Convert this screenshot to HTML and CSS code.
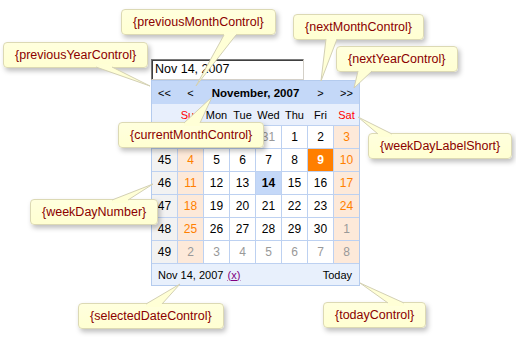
FILE: index.html
```html
<!DOCTYPE html>
<html>
<head>
<meta charset="utf-8">
<title>Calendar control</title>
<link rel="stylesheet" href="styles.css">
</head>
<body>
<div class="stage">
  <div class="widget">
    <div class="date-input">Nov 14, 2007</div>
    <div class="cal">
      <div class="cal-head">
        <span class="nav">&lt;&lt;</span>
        <span class="nav">&lt;</span>
        <span class="title">November, 2007</span>
        <span class="nav">&gt;</span>
        <span class="nav">&gt;&gt;</span>
      </div>
      <div class="cal-days">
        <span></span><span class="red">Sun</span><span>Mon</span><span>Tue</span><span>Wed</span><span>Thu</span><span>Fri</span><span class="red">Sat</span>
      </div>
      <div class="cal-grid">
        <span class="wk">44</span><span class="we other">28</span><span class="other">29</span><span class="other">30</span><span class="other">31</span><span>1</span><span>2</span><span class="we">3</span>
        <span class="wk">45</span><span class="we">4</span><span>5</span><span>6</span><span>7</span><span>8</span><span class="sel">9</span><span class="we">10</span>
        <span class="wk">46</span><span class="we">11</span><span>12</span><span>13</span><span class="today">14</span><span>15</span><span>16</span><span class="we">17</span>
        <span class="wk">47</span><span class="we">18</span><span>19</span><span>20</span><span>21</span><span>22</span><span>23</span><span class="we">24</span>
        <span class="wk">48</span><span class="we">25</span><span>26</span><span>27</span><span>28</span><span>29</span><span>30</span><span class="we other">1</span>
        <span class="wk">49</span><span class="we other">2</span><span class="other">3</span><span class="other">4</span><span class="other">5</span><span class="other">6</span><span class="other">7</span><span class="we other">8</span>
      </div>
      <div class="cal-foot">
        <span>Nov 14, 2007 <a class="clear">(x)</a></span>
        <span>Today</span>
      </div>
    </div>
  </div>

  <div class="tip t-prevmonth">{previousMonthControl}</div>
  <div class="tip t-prevyear">{previousYearControl}</div>
  <div class="tip t-nextmonth">{nextMonthControl}</div>
  <div class="tip t-nextyear">{nextYearControl}</div>
  <div class="tip t-curmonth">{currentMonthControl}</div>
  <div class="tip t-daylabel">{weekDayLabelShort}</div>
  <div class="tip t-weeknum">{weekDayNumber}</div>
  <div class="tip t-seldate">{selectedDateControl}</div>
  <div class="tip t-today">{todayControl}</div>

  <svg class="tails" width="516" height="340" viewBox="0 0 516 340">
    <g class="tail">
      <polygon points="224,32 224,35 196,86 236,35 236,32"/>
      <polyline points="224,35 196,86 236,35"/>
    </g>
    <g class="tail">
      <polygon points="96,64 96,67 150,86 112,67 112,64"/>
      <polyline points="96,67 150,86 112,67"/>
    </g>
    <g class="tail">
      <polygon points="326,36 326,39 321,81 337,39 337,36"/>
      <polyline points="326,39 321,81 337,39"/>
    </g>
    <g class="tail">
      <polygon points="358,68 358,71 354,88 372,71 372,68"/>
      <polyline points="358,71 354,88 372,71"/>
    </g>
    <g class="tail">
      <polygon points="184,126 184,123 212,97 200,123 200,126"/>
      <polyline points="184,123 212,97 200,123"/>
    </g>
    <g class="tail">
      <polygon points="378,137 378,134 358,117 392,134 392,137"/>
      <polyline points="378,134 358,117 392,134"/>
    </g>
    <g class="tail">
      <polygon points="112,203 112,200 153,184 128,200 128,203"/>
      <polyline points="112,200 153,184 128,200"/>
    </g>
    <g class="tail">
      <polygon points="146,307 146,304 180,284 162,304 162,307"/>
      <polyline points="146,304 180,284 162,304"/>
    </g>
    <g class="tail">
      <polygon points="388,306 388,303 360,283 404,303 404,306"/>
      <polyline points="388,303 360,283 404,303"/>
    </g>
  </svg>
</div>
</body>
</html>
```

FILE: styles.css
```css
* { box-sizing: border-box; }
html, body { margin: 0; padding: 0; background: #fff; }
body { font-family: "Liberation Sans", Arial, sans-serif; color: #000; }

.stage {
  position: relative;
  width: 516px;
  height: 340px;
  overflow: hidden;
}

.widget {
  padding: 59px 0 0 151px;
  display: flex;
  flex-direction: column;
  align-items: flex-start;
}

.date-input {
  width: 153px;
  height: 21px;
  border: 1px solid;
  border-color: #7a7a7a #d4d0c8 #d4d0c8 #7a7a7a;
  box-shadow: inset 1px 1px 0 #404040;
  font-size: 12.5px;
  line-height: 19px;
  padding: 0 0 0 3px;
  background: #fff;
}

.cal {
  width: 209px;
  border: 1px solid #b4cbee;
  font-size: 11px;
  background: #fff;
}

.cal-head, .cal-days, .cal-grid {
  display: grid;
  grid-template-columns: repeat(8, 25px);
  column-gap: 1px;
}

.cal-head {
  height: 23px;
  background: #c4d8f8;
  align-items: center;
}
.cal-head span { text-align: center; }
.cal-head .title {
  grid-column: 3 / 7;
  font-weight: bold;
  font-size: 11.5px;
}

.cal-days {
  height: 22px;
  background: #e8effc;
  align-items: center;
  border-bottom: 1px solid #bdd1f1;
}
.cal-days span { text-align: center; }
.red { color: #ff0000; }

.cal-grid {
  grid-auto-rows: 22px;
  row-gap: 1px;
  background: #bdd1f1;
  border-bottom: 1px solid #bdd1f1;
  font-size: 12px;
}
.cal-grid span {
  background: #fff;
  display: flex;
  align-items: center;
  justify-content: center;
}
.cal-grid .wk { background: #f2f2f2; }
.cal-grid .we { background: #fde9d9; color: #ff7f00; }
.cal-grid .other { color: #999; }
.cal-grid .sel { background: #ff7f00; color: #fff; font-weight: bold; }
.cal-grid .today { background: #c4d8f8; font-weight: bold; }

.cal-foot {
  height: 21px;
  background: #e8f0fc;
  display: flex;
  justify-content: space-between;
  align-items: center;
  padding: 0 7px 0 6px;
}
.clear { color: #800080; text-decoration: underline; margin-left: 1px; }

.tip {
  position: absolute;
  z-index: 2;
  background: linear-gradient(#ffffde, #ffffd2);
  border: 1px solid #dcd9b4;
  border-radius: 4px;
  box-shadow: 2px 3px 5px rgba(0, 0, 0, 0.25);
  color: #8b0000;
  font-size: 12.5px;
  line-height: 16px;
  padding: 4px 11px;
  white-space: nowrap;
}
.t-prevmonth { left: 121px; top: 9px; }
.t-prevyear  { left: 3px;   top: 42px; }
.t-nextmonth { left: 293px; top: 14px; }
.t-nextyear  { left: 336px; top: 46px; }
.t-curmonth  { left: 118px; top: 122px; }
.t-daylabel  { left: 368px; top: 133px; }
.t-weeknum   { left: 30px;  top: 199px; }
.t-seldate   { left: 78px;  top: 303px; }
.t-today     { left: 323px; top: 302px; }

.tails {
  position: absolute;
  left: 0;
  top: 0;
  z-index: 3;
  pointer-events: none;
}
.tail polygon { fill: #ffffd6; }
.tail polyline { fill: none; stroke: #d3d0b4; stroke-width: 1; }
```
